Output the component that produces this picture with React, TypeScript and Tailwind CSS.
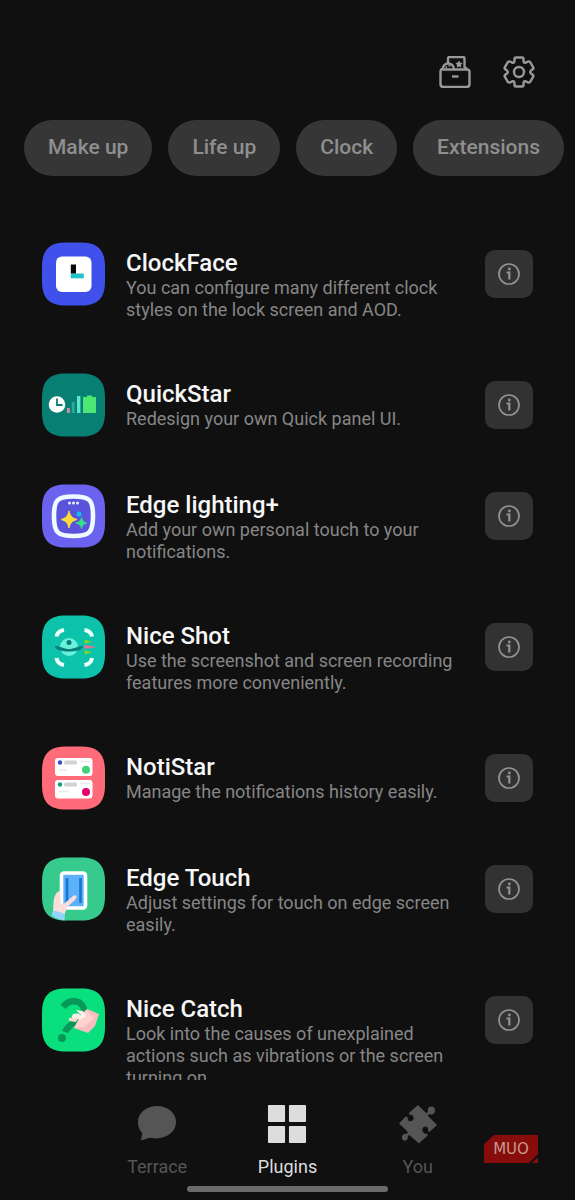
import { useState } from 'react';
import type { ReactNode } from 'react';

const categories = ['Make up', 'Life up', 'Clock', 'Extensions'];

const AppIcon = ({ color, children }: { color: string; children: ReactNode }) => (
    <svg className="size-16 shrink-0" viewBox="0 0 64 64" aria-hidden="true">
        <path d="M24 0.5H39C56 0.5 63 8 63 25V39C63 56 56 63.5 39 63.5H24C7 63.5 0 56 0 39V25C0 8 7 0.5 24 0.5Z" fill={color} />
        {children}
    </svg>
);

const ClockFaceIcon = () => (
    <AppIcon color="#3f51ea">
        <rect x="14" y="14.5" width="35.5" height="35.5" rx="6" fill="#fff" />
        <rect x="28.8" y="31.5" width="13" height="4.8" fill="#1fc3cb" />
        <path d="M28.8 22.5h5.2v9h-5.2z" fill="#080808" />
    </AppIcon>
);

const QuickStarIcon = () => (
    <AppIcon color="#078073">
        <circle cx="15" cy="31.5" r="8.3" fill="#fff" />
        <path d="M15 25.5V32H20.5" fill="none" stroke="#078073" strokeWidth="1.8" />
        <rect x="25" y="35" width="2.8" height="5" fill="#d48fa0" />
        <rect x="29.8" y="29" width="2.8" height="11" fill="#2fa89c" />
        <rect x="35" y="23" width="3.4" height="17" fill="#5ce5cf" />
        <path d="M41 24h4v-1.5h5V24H54v16H41z" fill="#4de873" />
    </AppIcon>
);

const EdgeLightingIcon = () => (
    <AppIcon color="#6b63f0">
        <path d="M31.5 12.5C48 12.5 51 16 51 32S48 52 31.5 52S12 48 12 32S15 12.5 31.5 12.5Z" fill="#5a54dc" stroke="#eefaff" strokeWidth="4.6" />
        <g fill="#e6f0ff">
            <circle cx="27.500" cy="19" r="1.500" />
            <circle cx="31.500" cy="19" r="1.500" />
            <circle cx="35.500" cy="19" r="1.500" />
        </g>
        <path d="M27 27C28.500 32.500 30 34 35 35.500C30 37 28.500 38.500 27 44C25.500 38.500 24 37 19 35.500C24 34 25.500 32.500 27 27Z" fill="#ffdc35" stroke="#ffdc35" />
        <path d="M39.500 33.500C40.300 37 41.500 38 44.500 39C41.500 40 40.300 41 39.500 44.500C38.700 41 37.500 40 34 39C37.500 38 38.700 37 39.500 33.500Z" fill="#36df8b" stroke="#36df8b" />
        <circle cx="37" cy="30" r="2.500" fill="#16b9ec" />
    </AppIcon>
);

const NiceShotIcon = () => (
    <AppIcon color="#0cc2aa">
        <path d="M14.500 21.500Q15.500 16 22 15M42.500 15Q49 16 50 21.500M14.500 43Q15.500 49 22 50M42.500 50Q49 49 50 43" fill="none" stroke="#effffb" strokeWidth="4" />
        <circle cx="27" cy="32" r="9" fill="#6af1da" />
        <path d="M13 31.500C15 29.500 21 34 27 34S39 29.500 41 31.500C41 34.500 34 36.500 27 36.500S13 34.500 13 31.500Z" fill="#087e78" />
        <circle cx="27" cy="27.500" r="2.500" fill="#087e78" />
        <path d="M42.500 24.500L50 26.500L42.500 29zM42.500 35L50 37.500L42.500 39.500z" fill="#77da27" />
        <path d="M42.500 30L55 32L42.500 34z" fill="#ed6e92" />
    </AppIcon>
);

const NotiStarIcon = () => (
    <AppIcon color="#ff6b78">
        <rect x="13" y="12" width="37.500" height="18" rx="3" fill="#fff" />
        <rect x="13" y="34" width="37.500" height="18.500" rx="3" fill="#fff" />
        <circle cx="18" cy="16.500" r="2.200" fill="#3453bf" />
        <circle cx="18" cy="38.500" r="2.200" fill="#159e7b" />
        <g fill="#d2d2d6">
            <rect x="22" y="14.500" width="13" height="4" rx="1.500" />
            <rect x="22" y="36.500" width="13" height="4" rx="1.500" />
        </g>
        <path d="M17 24h8M38 15.500h10M17 45.500h10M38 37.500h10" stroke="#e9e9ec" strokeWidth="1.500" />
        <circle cx="44" cy="23.800" r="4" fill="#43d17c" />
        <circle cx="44" cy="46" r="4" fill="#e5006d" />
    </AppIcon>
);

const EdgeTouchIcon = () => (
    <AppIcon color="#36cb8d">
        <rect x="19.500" y="16" width="24" height="35" rx="2.500" fill="#5cb1f7" stroke="#fff" strokeWidth="3.600" />
        <path d="M25 21v25M38.500 21v25" stroke="#1677d4" strokeWidth="2.700" />
        <path d="M18 34C14 35 12 39 11.500 46L11 55L22 59L25 50L33 43C36 40 34 37 31 39L23 46L19 47Z" fill="#fbdedc" />
        <path d="M11 53.500Q17 54 23 57L22.500 63.500C18 63 13 61 9.500 58.500Z" fill="#91d5f8" />
    </AppIcon>
);

const NiceCatchIcon = () => (
    <AppIcon color="#09df7d">
        <path d="M21 19C29 9 42 13 42 23C42 32 28 33 23 44" fill="none" stroke="#07995a" strokeWidth="6.500" />
        <circle cx="20" cy="50" r="4" fill="#07995a" />
        <path d="M45 21L57 26L53 38L46 45L32 40L38 29Z" fill="#f8bdc0" />
        <path d="M44 22L52 30L42 39L32 40L38 29Z" fill="#ffd1cf" />
        <path d="M34 22L41 23L44 28L38 32L39 27Z" fill="#fff0e9" />
        <path d="M31 26Q38 24 40 29Q37 33 29 31Z" fill="#fff0e9" />
        <path d="M27 30L36 30L34 34L27 33Z" fill="#fbd8d0" />
    </AppIcon>
);

const plugins = [
    { name: 'ClockFace', text: 'You can configure many different clock styles on the lock screen and AOD.', icon: <ClockFaceIcon /> },
    { name: 'QuickStar', text: 'Redesign your own Quick panel UI.', icon: <QuickStarIcon /> },
    { name: 'Edge lighting+', text: 'Add your own personal touch to your notifications.', icon: <EdgeLightingIcon /> },
    { name: 'Nice Shot', text: 'Use the screenshot and screen recording features more conveniently.', icon: <NiceShotIcon /> },
    { name: 'NotiStar', text: 'Manage the notifications history easily.', icon: <NotiStarIcon /> },
    { name: 'Edge Touch', text: 'Adjust settings for touch on edge screen easily.', icon: <EdgeTouchIcon /> },
    { name: 'Nice Catch', text: 'Look into the causes of unexplained actions such as vibrations or the screen turning on.', icon: <NiceCatchIcon /> },
];

const tabs = [
    {
        name: 'Terrace',
        icon: <path d="M20.500 2C9.500 2 1 9 1 18.500C1 23 2.500 27 5.500 30L4 37.500L13 34.500C28 38 40 29.500 40 18.500C40 9 31.500 2 20.500 2Z" />,
    },
    {
        name: 'Plugins',
        icon: (
            <>
                <rect x="1" y="1" width="17.500" height="17.500" rx="1" />
                <rect x="22.500" y="1" width="17.500" height="17.500" rx="1" />
                <rect x="1" y="22.500" width="17.500" height="17.500" rx="1" />
                <rect x="22.500" y="22.500" width="17.500" height="17.500" rx="1" />
            </>
        ),
    },
    {
        name: 'You',
        icon: (
            <path d="M20.500 1L28 8.500C29.500 10 31 9 30.500 7C30 1.500 38 1 38 6.500C38 10 35.500 11.500 32 10.500C30.500 10.500 30.500 12 31.500 13L40 21.500L33 28C31.500 29.500 30.500 28 31 26.500C31 22 25 22 25 26.500C25 29 26.500 30.500 29 30.500C31 30.500 31 32 29.500 33L21.500 40.500L13 33C11.500 31.500 10 32 10 34C10 39.500 3.500 38 4 34C4 31.500 6 30 9 30.500C10.500 30 10 28.500 9 27.500L1 20L7 13.500C8.500 12 10 13 10 15C10.500 19 16 18 16 14.500C16 12 14.500 11 12.500 11C10.500 10.500 11 9 12 8.500Z" />
        ),
    },
];

const App = () => {
    const [activeTab, setActiveTab] = useState('Plugins');

    return (
        <div className="flex h-screen flex-col overflow-hidden bg-[#101010] font-['Roboto',sans-serif]">
            <header className="flex justify-end gap-6 px-9 pt-13">
                <button type="button" aria-label="My collection" className="flex size-10 items-center justify-center text-[#999]">
                    <svg className="size-8" viewBox="0 0 32 32" fill="none" stroke="currentColor" strokeWidth="2.400" strokeLinejoin="round" aria-hidden="true">
                        <path d="M9 7V2.500Q9 1 10.500 1H24Q25.500 1 25.500 2.500V11L28 13" />
                        <path d="M4 13.500C3 5.500 15 5.500 15 13.500" />
                        <path d="M4 13Q1.500 13 1.500 16V28Q1.500 31 4.500 31H27.500Q30.500 31 30.500 28V16Q30.500 13.500 28 13.500H4" />
                        <path d="M13 20.500h6.500" />
                        <path d="M20 4.500L21.200 6.500L23.500 7L22 9L22.200 11.500L20 10.500L17.800 11.500L18 9L16.500 7L18.800 6.500Z" fill="currentColor" stroke="none" />
                        <g fill="currentColor" stroke="none">
                            <circle cx="10.500" cy="9.800" r="1" />
                            <circle cx="7.300" cy="11" r="0.900" />
                        </g>
                    </svg>
                </button>
                <button type="button" aria-label="Settings" className="flex size-10 items-center justify-center text-[#999]">
                    <svg className="size-8" viewBox="0 0 32 32" fill="none" stroke="currentColor" strokeWidth="2.400" strokeLinejoin="round" aria-hidden="true">
                        <path d="M11.500 3Q11.500 1.500 13 1.500H19Q20.500 1.500 20.500 3V5Q20.500 7 22.300 6.800L25 5.500Q26.300 5 27.200 6.200L30.200 11.300Q30.800 12.500 29.700 13.300L28 14.500Q26.500 16 28 17.500L29.700 18.700Q30.800 19.500 30.200 20.700L27.200 25.800Q26.300 27 25 26.500L22.300 25.200Q20.500 25 20.500 27V29Q20.500 30.500 19 30.500H13Q11.500 30.500 11.500 29V27Q11.500 25 9.700 25.200L7 26.500Q5.700 27 4.800 25.800L1.800 20.700Q1.200 19.500 2.300 18.700L4 17.500Q5.500 16 4 14.500L2.300 13.300Q1.200 12.500 1.800 11.300L4.800 6.200Q5.700 5 7 5.500L9.700 6.800Q11.500 7 11.500 5Z" />
                        <circle cx="16" cy="16" r="5" />
                    </svg>
                </button>
            </header>

            <div className="mt-7 flex shrink-0 gap-4 overflow-hidden pl-6">
                {categories.map((category) => (
                    <button key={category} type="button" className="h-14 shrink-0 rounded-full bg-[#363636] px-6 text-[21px] font-medium text-[#8f8f8f]">
                        {category}
                    </button>
                ))}
            </div>

            <main className="min-h-0 flex-1 overflow-hidden px-[42px] pt-[66px]">
                <ul className="flex flex-col gap-[47px]">
                    {plugins.map((plugin) => (
                        <li key={plugin.name} className="flex items-start">
                            {plugin.icon}
                            <div className="ml-5 min-w-0 flex-1 pt-2 pb-[5px]">
                                <h2 className="text-[24px] leading-[27px] font-medium text-[#f7f7f7]">{plugin.name}</h2>
                                <p className="text-[18px] leading-[22px] text-[#868686]">{plugin.text}</p>
                            </div>
                            <button
                                type="button"
                                aria-label={`About ${plugin.name}`}
                                className="mt-2 ml-6 flex size-12 shrink-0 items-center justify-center rounded-[10px] bg-[#323232] text-[#929292]"
                            >
                                <svg className="size-6" viewBox="0 0 24 24" fill="none" stroke="currentColor" strokeWidth="1.700" aria-hidden="true">
                                    <circle cx="12" cy="12" r="10" />
                                    <path d="M9.500 10.500H12.300V17.500" strokeWidth="2.200" />
                                    <circle cx="12.300" cy="7" r="1.400" fill="currentColor" stroke="none" />
                                </svg>
                            </button>
                        </li>
                    ))}
                </ul>
            </main>

            <footer className="relative shrink-0 bg-[#101010] pt-5 pb-2">
                <nav className="mx-auto grid w-[68%] grid-cols-3">
                    {tabs.map((tab) => (
                        <button
                            key={tab.name}
                            type="button"
                            onClick={() => setActiveTab(tab.name)}
                            className={`flex flex-col items-center gap-3 pt-1 text-[18px] leading-[22px] ${activeTab === tab.name ? 'text-[#ddd]' : 'text-[#555]'}`}
                        >
                            <svg className="size-10" viewBox="0 0 41 41" fill="currentColor" aria-hidden="true">
                                {tab.icon}
                            </svg>
                            {tab.name}
                        </button>
                    ))}
                </nav>
                <div className="mx-auto mt-2 h-[6px] w-[35%] rounded-full bg-[#6b6b6b]" />
                <div className="absolute right-9 bottom-9 flex h-[30px] w-14 items-center justify-center">
                    <svg className="absolute inset-0 size-full" viewBox="0 0 56 30" aria-hidden="true">
                        <path d="M11 1H55V20L46 29H1V10Z" fill="#870d0d" />
                        <path d="M55 23V29H49Z" fill="#870d0d" />
                    </svg>
                    <span className="relative font-['DejaVu_Sans',sans-serif] text-[15px] leading-none text-[#c69a8c]">MUO</span>
                </div>
            </footer>
        </div>
    );
};

export default App;
